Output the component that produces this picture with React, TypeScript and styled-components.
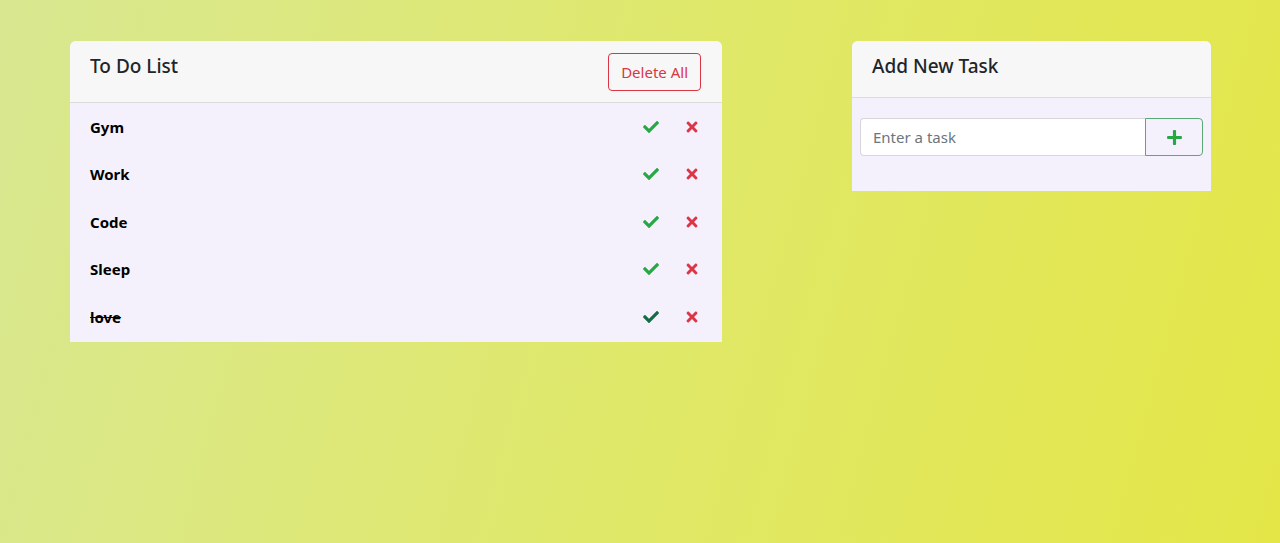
import React from "react";
import styled, { createGlobalStyle } from "styled-components";
import { FaCheck, FaTimes, FaPlus } from "react-icons/fa";

const GlobalStyle = createGlobalStyle`
  html, body { margin: 0; padding: 0; }
  body {
    font-family: "Noto Sans", "Open Sans", "Liberation Sans", sans-serif;
    color: #212529;
  }
  * { box-sizing: border-box; }
`;

const Page = styled.div`
  width: 1280px;
  height: 543px;
  background: linear-gradient(105deg, #d9e791 0%, #dfe86a 50%, #e4e647 100%);
  display: flex;
  justify-content: space-between;
  align-items: flex-start;
  padding: 41px 69px 0 70px;
`;

const Card = styled.section<{ $width: number }>`
  width: ${(p) => p.$width}px;
  background: #f4f1fc;
  border-radius: 6px 6px 0 0;
  overflow: hidden;
`;

const CardHeader = styled.header`
  background: #f7f7f7;
  border-bottom: 1px solid #dcdcdc;
  display: flex;
  justify-content: space-between;
  align-items: flex-start;
  padding: 12px 21px 11px 20px;
`;

const Title = styled.h2`
  margin: 1px 0 8px 0;
  font-size: 19px;
  font-weight: 500;
  line-height: 24px;
  color: #212529;
`;

const DeleteButton = styled.button`
  height: 38px;
  padding: 0 12px;
  background: transparent;
  border: 1px solid #dc3545;
  border-radius: 4px;
  color: #dc3545;
  font-family: inherit;
  font-size: 15px;
`;

const TaskList = styled.ul`
  list-style: none;
  margin: 0;
  padding: 0 0 1px 0;
`;

const TaskRow = styled.li`
  height: 47.5px;
  display: flex;
  align-items: center;
  padding: 0 22px 0 20px;
`;

const TaskName = styled.span<{ $done?: boolean }>`
  flex: 1;
  font-weight: 700;
  font-size: 15px;
  color: #000;
  text-decoration: ${(p) => (p.$done ? "line-through" : "none")};
`;

const IconButton = styled.button<{ $color: string }>`
  background: none;
  border: none;
  padding: 0;
  margin-left: 24px;
  width: 17px;
  display: flex;
  justify-content: center;
  color: ${(p) => p.$color};
  font-size: 16px;
`;

const AddBody = styled.div`
  padding: 20px 8px 35px 8px;
  display: flex;
`;

const TaskInput = styled.input`
  flex: 1;
  height: 38px;
  border: 1px solid #d6d6dc;
  border-right: none;
  border-radius: 4px 0 0 4px;
  padding: 0 12px;
  font-family: inherit;
  font-size: 15px;
  background: #fff;
  &::placeholder { color: #6c757d; }
`;

const AddButton = styled.button`
  width: 58px;
  height: 38px;
  border: 1px solid #5aa874;
  border-radius: 0 4px 4px 0;
  background: transparent;
  color: #28a745;
  display: flex;
  align-items: center;
  justify-content: center;
  font-size: 17px;
`;

const tasks = [
  { name: "Gym", done: false },
  { name: "Work", done: false },
  { name: "Code", done: false },
  { name: "Sleep", done: false },
  { name: "love", done: true },
];

export default function App() {
  return (
    <>
      <GlobalStyle />
      <Page>
        <Card $width={652}>
          <CardHeader>
            <Title>To Do List</Title>
            <DeleteButton>Delete All</DeleteButton>
          </CardHeader>
          <TaskList>
            {tasks.map((t) => (
              <TaskRow key={t.name}>
                <TaskName $done={t.done}>{t.name}</TaskName>
                <IconButton $color={t.done ? "#146c43" : "#28a745"}>
                  <FaCheck />
                </IconButton>
                <IconButton $color="#dc3545">
                  <FaTimes />
                </IconButton>
              </TaskRow>
            ))}
          </TaskList>
        </Card>
        <Card $width={359}>
          <CardHeader>
            <Title>Add New Task</Title>
          </CardHeader>
          <AddBody>
            <TaskInput placeholder="Enter a task" />
            <AddButton>
              <FaPlus />
            </AddButton>
          </AddBody>
        </Card>
      </Page>
    </>
  );
}
